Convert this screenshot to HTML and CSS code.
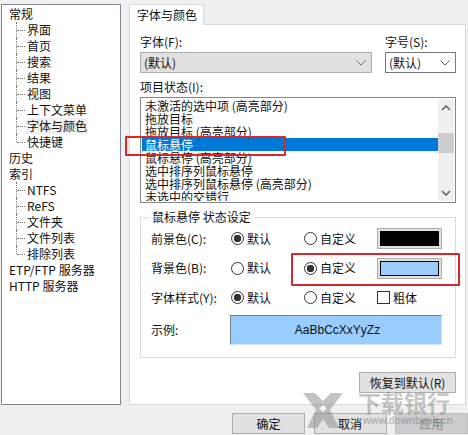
FILE: index.html
```html
<!DOCTYPE html>
<html lang="zh">
<head>
<meta charset="utf-8">
<title>字体与颜色</title>
<link rel="stylesheet" href="styles.css">
</head>
<body>
<div class="dialog">
  <div class="main">
    <nav class="tree">
      <div class="node">常规</div>
      <div class="kids">
        <div class="kid"><span>界面</span></div>
        <div class="kid"><span>首页</span></div>
        <div class="kid"><span>搜索</span></div>
        <div class="kid"><span>结果</span></div>
        <div class="kid"><span>视图</span></div>
        <div class="kid"><span>上下文菜单</span></div>
        <div class="kid current"><span>字体与颜色</span></div>
        <div class="kid"><span>快捷键</span></div>
      </div>
      <div class="node">历史</div>
      <div class="node">索引</div>
      <div class="kids">
        <div class="kid"><span>NTFS</span></div>
        <div class="kid"><span>ReFS</span></div>
        <div class="kid"><span>文件夹</span></div>
        <div class="kid"><span>文件列表</span></div>
        <div class="kid"><span>排除列表</span></div>
      </div>
      <div class="node">ETP/FTP 服务器</div>
      <div class="node">HTTP 服务器</div>
    </nav>
    <section class="tabs">
      <div class="tab">字体与颜色</div>
      <div class="page">
        <div class="fonts">
          <div>
            <div class="label">字体(F):</div>
            <div class="select disabled"><span>(默认)</span><svg width="10" height="6" viewBox="0 0 10 6"><path d="M.5.5 5 5 9.500.5" fill="none" stroke="#6d6d6d"/></svg></div>
          </div>
          <div>
            <div class="label">字号(S):</div>
            <div class="select"><span>(默认)</span><svg width="10" height="6" viewBox="0 0 10 6"><path d="M.5.5 5 5 9.500.5" fill="none" stroke="#606060"/></svg></div>
          </div>
        </div>
        <div class="label state-label">项目状态(I):</div>
        <div class="listbox">
          <div class="rows">
            <div class="row">未激活的选中项 (高亮部分)</div>
            <div class="row">拖放目标</div>
            <div class="row">拖放目标 (高亮部分)</div>
            <div class="row selected">鼠标悬停</div>
            <div class="row">鼠标悬停 (高亮部分)</div>
            <div class="row">选中排序列鼠标悬停</div>
            <div class="row">选中排序列鼠标悬停 (高亮部分)</div>
            <div class="row">未选中的交错行</div>
          </div>
          <div class="scroll">
            <svg width="10" height="6" viewBox="0 0 10 6"><path d="M1 5 5 1 9 5" fill="none" stroke="#606060" stroke-width="1.500"/></svg>
            <div class="track"><div class="thumb"></div></div>
            <svg width="10" height="6" viewBox="0 0 10 6"><path d="M1 1 5 5 9 1" fill="none" stroke="#606060" stroke-width="1.500"/></svg>
          </div>
        </div>
        <fieldset class="group">
          <legend>鼠标悬停 状态设定</legend>
          <div class="opt first">
            <div class="opt-label">前景色(C):</div>
            <div class="choice"><i class="radio on"></i>默认</div>
            <div class="choice"><i class="radio"></i>自定义</div>
            <div class="swatch"><b class="black"></b></div>
          </div>
          <div class="opt">
            <div class="opt-label">背景色(B):</div>
            <div class="choice"><i class="radio"></i>默认</div>
            <div class="choice"><i class="radio on"></i>自定义</div>
            <div class="swatch"><b class="blue"></b></div>
          </div>
          <div class="opt">
            <div class="opt-label">字体样式(Y):</div>
            <div class="choice"><i class="radio on"></i>默认</div>
            <div class="choice"><i class="radio"></i>自定义</div>
            <div class="choice bold"><i class="check"></i>粗体</div>
          </div>
          <div class="sample-row">
            <div class="sample-label">示例:</div>
            <div class="sample">AaBbCcXxYyZz</div>
          </div>
        </fieldset>
        <div class="restore-row"><div class="btn restore">恢复到默认(R)</div></div>
      </div>
    </section>
  </div>
  <div class="footer">
    <div class="btn">确定</div>
    <div class="btn">取消</div>
    <div class="btn off">应用</div>
  </div>
  <div class="mark mark-a"></div>
  <div class="mark mark-b"></div>
  <div class="wm">
    <svg class="wm-logo" width="40" height="35" viewBox="0 0 40 35"><path d="M0 0H12L20 8 28 0H40L27 17 36 35H26L20 26 14 35H4L13 17Z" fill="#888" opacity=".5"/><path d="M20 12l3.500 3.500L20 19l-3.500-3.500z" fill="#fff" opacity=".9"/></svg>
    <div class="wm-text">下载银行</div>
    <div class="wm-url">www.downbank.cn</div>
  </div>
</div>
</body>
</html>
```
FILE: styles.css
```css
* { box-sizing: border-box; }
html, body { margin: 0; padding: 0; }
body { width: 468px; height: 435px; background: #f0f0f0; overflow: hidden; font: 12px/16px "Noto Sans CJK SC", "Liberation Sans", sans-serif; color: #111; }
.dialog { position: relative; width: 468px; height: 435px; display: flex; flex-direction: column; }
.main { display: flex; gap: 8px; padding: 4px 2px 0 1px; height: 405px; }
.tree { width: 121px; height: 401px; background: #fff; border: 1px solid #828790; padding: 1px 0 0 7px; }
.node { height: 16px; white-space: nowrap; }
.kids { margin-left: 7px; }
.kid { position: relative; height: 16px; padding-left: 10px; white-space: nowrap; }
.kid::before { content: ""; position: absolute; left: 0; top: 0; bottom: 0; border-left: 1px dotted #777; }
.kid:last-child::before { bottom: 8px; }
.kid::after { content: ""; position: absolute; left: 1px; top: 8px; width: 8px; border-top: 1px dotted #777; }
.kid span { display: inline-block; padding: 0 1px; }
.current span { background: #f0f0f0; }
.tabs { flex: 1; display: flex; flex-direction: column; align-items: flex-start; }
.tab { position: relative; z-index: 1; width: 75px; height: 21px; margin-bottom: -1px; padding: 2px 0 0 7px; background: #fff; border: 1px solid #d9d9d9; border-bottom: 0; }
.page { align-self: stretch; flex: 1; background: #fff; border: 1px solid #d9d9d9; padding: 8px 9px 0 10px; }
.fonts { display: grid; grid-template-columns: 232px 71px; column-gap: 13px; }
.label { height: 19px; line-height: 17px; }
.select { height: 21px; display: flex; align-items: center; justify-content: space-between; padding: 0 5px 0 3px; border: 1px solid #7a7a7a; }
.select.disabled { background: #e1e1e1; border-color: #adadad; }
.state-label { margin-top: 5px; height: 17px; }
.listbox { display: flex; width: 316px; height: 106px; margin-top: 2px; border: 1px solid #828790; padding: 1px; }
.rows { flex: 1; overflow: hidden; }
.row { height: 13px; line-height: 13px; padding-left: 3px; white-space: nowrap; }
.selected { background: #0078d7; color: #fff; }
.scroll { width: 16px; display: flex; flex-direction: column; align-items: center; background: #f0f0f0; padding: 6px 0 5px; }
.track { flex: 1; width: 100%; padding-top: 22px; }
.thumb { height: 20px; background: #cdcdcd; }
.group { width: 316px; height: 149px; margin: 6px 0 0; padding: 0 0 0 10px; border: 1px solid #dcdcdc; min-inline-size: 0; }
.group legend { padding: 0 3px; margin-left: -2px; line-height: 16px; }
.opt { display: flex; align-items: center; height: 29.5px; }
.opt.first { margin-top: -1px; }
.opt-label { width: 80px; flex: none; white-space: nowrap; }
.sample-label { width: 79px; flex: none; }
.choice { display: flex; align-items: center; width: 73px; flex: none; white-space: nowrap; }
.radio { width: 13px; height: 13px; margin-right: 3px; border: 1px solid #333; border-radius: 50%; background: #fff; }
.radio.on { background: radial-gradient(circle, #333 0 3.500px, #fff 4px); }
.check { width: 13px; height: 13px; margin-right: 3px; border: 1px solid #333; }
.bold { width: auto; }
.swatch { width: 65px; height: 21px; padding: 2px; background: #e1e1e1; border: 1px solid #adadad; }
.swatch b { display: block; height: 100%; border: 1px solid #000; }
.black { background: #000; }
.blue { background: #99ccff; }
.sample-row { display: flex; align-items: center; margin-top: 2.500px; height: 30px; }
.sample { width: 212px; height: 30px; line-height: 28px; padding-left: 3px; text-align: center; background: #99ccff; border: 1px solid; border-color: #6f7f92 #cfe5fb #cfe5fb #6f7f92; font-family: "Liberation Sans", sans-serif; font-size: 12px; }
.restore-row { display: flex; justify-content: flex-end; width: 316px; margin-top: 14px; }
.btn { display: flex; align-items: center; justify-content: center; width: 73px; height: 21px; background: #e1e1e1; border: 1px solid #adadad; }
.restore { width: 97px; }
.footer { display: flex; justify-content: flex-end; gap: 8.500px; margin-top: 8px; }
.off { background: #ccc; border-color: #bfbfbf; color: #838383; }
.mark { position: absolute; border: 2px solid #d9272e; border-radius: 1px; }
.mark-a { left: 125px; top: 136px; width: 161px; height: 20px; }
.mark-b { left: 291px; top: 253px; width: 169px; height: 33px; }
.wm { position: absolute; left: 0; top: 0; width: 468px; height: 435px; pointer-events: none; }
.wm-logo { position: absolute; left: 303px; top: 393px; }
.wm-text { position: absolute; left: 358px; top: 387px; font-size: 23px; line-height: 30px; font-weight: 700; color: rgba(125,125,125,.45); white-space: nowrap; }
.wm-url { position: absolute; left: 363px; top: 415px; font: 700 10px/12px "Liberation Sans", sans-serif; color: rgba(120,120,120,.45); white-space: nowrap; }
```
